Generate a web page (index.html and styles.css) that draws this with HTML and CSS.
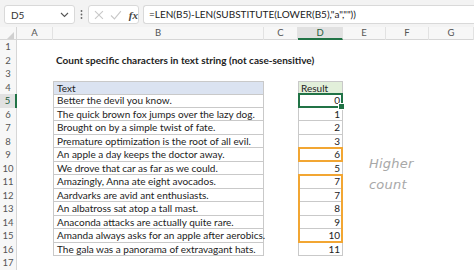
FILE: index.html
```html
<!DOCTYPE html>
<html lang="en">
<head>
<meta charset="utf-8">
<title>Count specific characters</title>
<link rel="stylesheet" href="styles.css">
</head>
<body>
<div class="fbar">
  <div class="namebox">
    <span class="name">D5</span>
    <svg class="chev" width="9" height="6" viewBox="0 0 9 6"><path d="M1 1 L4.5 4.5 L8 1" fill="none" stroke="#555" stroke-width="1.1"/></svg>
  </div>
  <div class="dots">
    <svg width="3" height="11" viewBox="0 0 3 11"><circle cx="1.5" cy="2" r="0.9" fill="#666"/><circle cx="1.5" cy="5.5" r="0.9" fill="#666"/><circle cx="1.5" cy="9" r="0.9" fill="#666"/></svg>
  </div>
  <div class="fxbox">
    <svg width="10" height="10" viewBox="0 0 10 10"><path d="M1 1 L9 9 M9 1 L1 9" stroke="#c8c8c8" stroke-width="1.1"/></svg>
    <svg width="12" height="10" viewBox="0 0 12 10"><path d="M1 5.5 L4.5 9 L11 1" fill="none" stroke="#c8c8c8" stroke-width="1.1"/></svg>
    <span class="fx">fx</span>
  </div>
  <div class="formula">=LEN(B5)-LEN(SUBSTITUTE(LOWER(B5),"a",""))</div>
</div>

<div class="sheet">
  <div class="row head">
    <div class="corner"><svg width="7" height="7" viewBox="0 0 7 7"><path d="M7 0 L7 7 L0 7 Z" fill="#d0d0d0"/></svg></div>
    <div class="col">A</div><div class="col">B</div><div class="col">C</div><div class="col on">D</div><div class="col">E</div><div class="col">F</div><div class="col">G</div>
  </div>
  <div class="row"><div class="rn">1</div><div></div><div></div><div></div><div></div><div></div><div></div><div></div></div>
  <div class="row"><div class="rn">2</div><div></div><div class="title">Count specific characters in text string (not case-sensitive)</div><div></div><div></div><div></div><div></div><div></div></div>
  <div class="row"><div class="rn">3</div><div></div><div></div><div></div><div></div><div></div><div></div><div></div></div>
  <div class="row"><div class="rn">4</div><div></div><div class="bx txt th">Text</div><div></div><div class="bx rh">Result</div><div></div><div></div><div></div></div>
  <div class="row"><div class="rn cur">5</div><div></div><div class="bx txt">Better the devil you know.</div><div></div><div class="bx num sel">0</div><div></div><div></div><div></div></div>
  <div class="row"><div class="rn">6</div><div></div><div class="bx txt">The quick brown fox jumps over the lazy dog.</div><div></div><div class="bx num">1</div><div></div><div></div><div></div></div>
  <div class="row"><div class="rn">7</div><div></div><div class="bx txt">Brought on by a simple twist of fate.</div><div></div><div class="bx num">2</div><div></div><div></div><div></div></div>
  <div class="row"><div class="rn">8</div><div></div><div class="bx txt">Premature optimization is the root of all evil.</div><div></div><div class="bx num">3</div><div></div><div></div><div></div></div>
  <div class="row"><div class="rn">9</div><div></div><div class="bx txt">An apple a day keeps the doctor away.</div><div></div><div class="bx num hi">6</div><div></div><div></div><div></div></div>
  <div class="row"><div class="rn">10</div><div></div><div class="bx txt">We drove that car as far as we could.</div><div></div><div class="bx num">5</div><div></div><div></div><div></div></div>
  <div class="row"><div class="rn">11</div><div></div><div class="bx txt">Amazingly, Anna ate eight avocados.</div><div></div><div class="bx num hi-top">7</div><div></div><div></div><div></div></div>
  <div class="row"><div class="rn">12</div><div></div><div class="bx txt">Aardvarks are avid ant enthusiasts.</div><div></div><div class="bx num hi-mid">7</div><div></div><div></div><div></div></div>
  <div class="row"><div class="rn">13</div><div></div><div class="bx txt">An albatross sat atop a tall mast.</div><div></div><div class="bx num hi-mid">8</div><div></div><div></div><div></div></div>
  <div class="row"><div class="rn">14</div><div></div><div class="bx txt">Anaconda attacks are actually quite rare.</div><div></div><div class="bx num hi-mid">9</div><div></div><div></div><div></div></div>
  <div class="row"><div class="rn">15</div><div></div><div class="bx txt">Amanda always asks for an apple after aerobics.</div><div></div><div class="bx num hi-bot">10</div><div></div><div></div><div></div></div>
  <div class="row"><div class="rn">16</div><div></div><div class="bx txt">The gala was a panorama of extravagant hats.</div><div></div><div class="bx num">11</div><div></div><div></div><div></div></div>
  <div class="row"><div class="rn">17</div><div></div><div></div><div></div><div></div><div></div><div></div><div></div></div>

  <div class="note">Higher<br>count</div>
</div>
</body>
</html>
```

FILE: styles.css
```css
* { box-sizing: border-box; }

html, body {
  margin: 0;
  padding: 0;
  width: 474px;
  height: 270px;
  overflow: hidden;
  background: #fff;
  font-family: "Lato", "Liberation Sans", sans-serif;
  color: #222;
}

/* formula bar */
.fbar {
  height: 27px;
  background: #f3f3f3;
  display: flex;
  align-items: flex-start;
  padding: 5px 0 0 4px;
}
.namebox {
  width: 71px;
  height: 19px;
  background: #fff;
  border: 1px solid #d9d9d9;
  border-radius: 3px;
  display: flex;
  align-items: center;
  justify-content: space-between;
  padding: 0 5px 0 6px;
  font-size: 10px;
  color: #333;
}
.dots {
  width: 13px;
  height: 19px;
  display: flex;
  align-items: center;
  justify-content: center;
}
.fxbox {
  width: 51px;
  height: 19px;
  background: #fff;
  border: 1px solid #d9d9d9;
  border-radius: 3px;
  display: flex;
  align-items: center;
  gap: 6px;
  padding-left: 5px;
}
.fx {
  font-family: "Liberation Serif", serif;
  font-style: italic;
  font-weight: bold;
  font-size: 11px;
  color: #444;
  margin-left: 1px;
}
.formula {
  flex: 1;
  margin-left: 4px;
  height: 19px;
  background: #fff;
  border: 1px solid #d9d9d9;
  border-right: 0;
  border-radius: 3px 0 0 3px;
  font-size: 10px;
  line-height: 17px;
  padding-left: 5px;
  color: #222;
  white-space: nowrap;
}

/* grid */
.sheet {
  position: relative;
}
.row {
  display: grid;
  grid-template-columns: 17px 36px 211px 34px 45px 43px 43px 1fr;
  height: 13.5px;
  font-size: 10px;
  line-height: 12px;
}
.row.head {
  height: 13px;
  background: #f7f7f7;
  border-bottom: 1px solid #d6d6d6;
}
.corner {
  border-right: 1px solid #d6d6d6;
  display: flex;
  align-items: flex-end;
  justify-content: flex-end;
  padding: 0 2px 1px 0;
}
.col {
  text-align: center;
  color: #555;
  font-size: 9.5px;
  line-height: 12px;
  border-right: 1px solid #e2e2e2;
}
.col.on {
  background: #e1e1e1;
  border-bottom: 2px solid #217346;
  color: #1e5e3a;
  height: 13px;
}
.rn {
  background: #f7f7f7;
  border-right: 1px solid #d6d6d6;
  text-align: center;
  color: #555;
  font-size: 9.5px;
  line-height: 13px;
}
.rn.cur {
  background: #e1e1e1;
  border-right: 2px solid #217346;
  color: #1e5e3a;
}

.title {
  font-weight: bold;
  white-space: nowrap;
  padding-left: 3px;
  line-height: 13px;
}

/* bordered table cells */
.bx {
  border-left: 1px solid #c9c9c9;
  border-right: 1px solid #c9c9c9;
  border-bottom: 1px solid #c9c9c9;
  white-space: nowrap;
  line-height: 12px;
  position: relative;
}
.txt { padding-left: 3px; }
.th { background: #dbe3f1; border-top: 1px solid #c9c9c9; }
.rh { background: #e2efda; border-top: 1px solid #c9c9c9; padding-left: 2px; }
.num { text-align: right; padding-right: 2px; }

/* active cell */
.sel::after {
  content: "";
  position: absolute;
  inset: -1px -1px -1px -1px;
  border: 2px solid #217346;
}
.sel::before {
  content: "";
  position: absolute;
  right: -3px;
  bottom: -3px;
  width: 5px;
  height: 5px;
  background: #217346;
  border: 1px solid #fff;
  z-index: 2;
}

/* highlighted results */
.hi::after,
.hi-top::after,
.hi-mid::after,
.hi-bot::after {
  content: "";
  position: absolute;
  inset: -1px -1px -1px -1px;
  border: 2px solid #f2a633;
}
.hi-top::after { border-bottom: 0; bottom: -1px; }
.hi-mid::after { border-top: 0; border-bottom: 0; top: -1px; bottom: -1px; }
.hi-bot::after { border-top: 0; top: -1px; }

/* floating text box */
.note {
  position: absolute;
  left: 369px;
  top: 126px;
  font-family: "DejaVu Sans", sans-serif;
  font-style: italic;
  font-size: 13px;
  line-height: 21px;
  color: #a8a8a8;
  letter-spacing: 0.2px;
}
```
